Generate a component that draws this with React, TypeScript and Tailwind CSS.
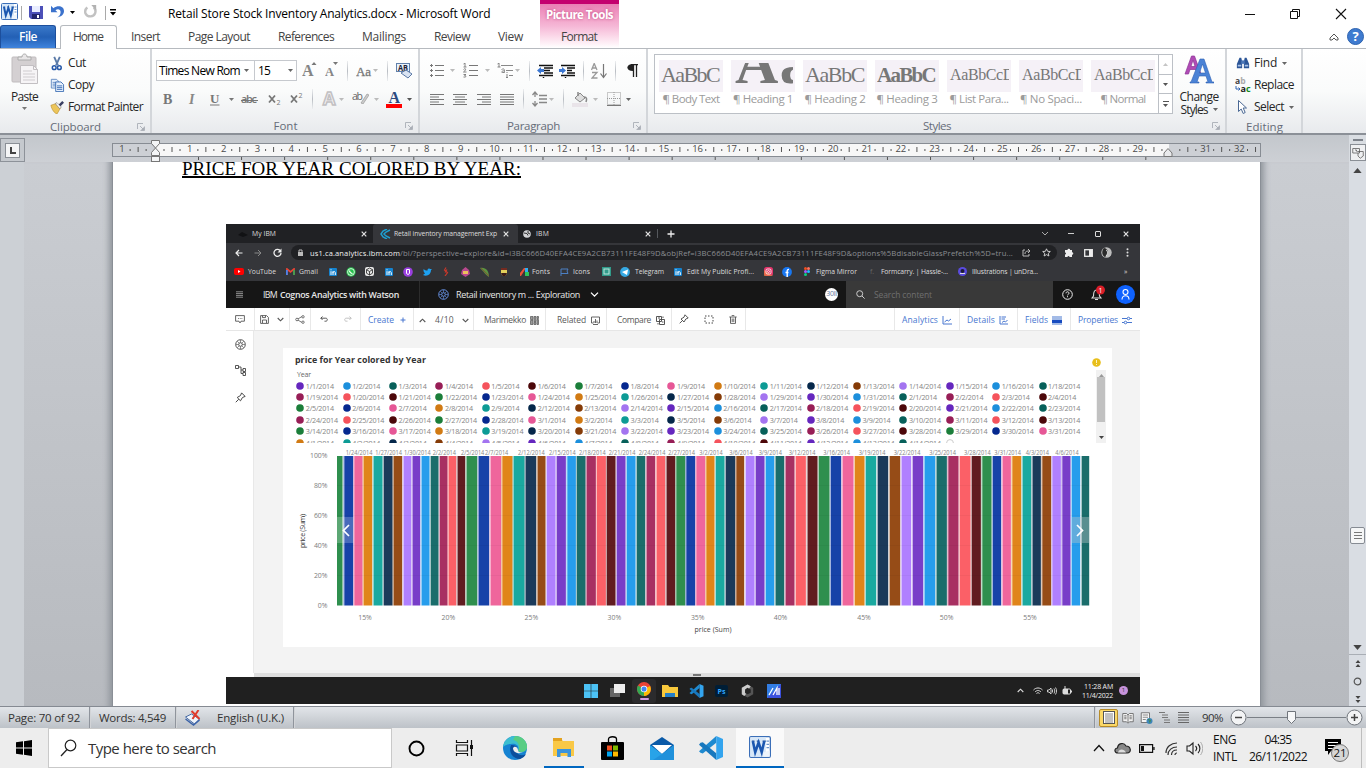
import { useLayoutEffect, useRef, type ReactNode } from "react";

/* Text set to an exact measure: tracking is computed from the natural width. */
function Fit({ c, children }: { c: string; children: string }) {
  const box = useRef<HTMLSpanElement>(null);
  const ink = useRef<HTMLSpanElement>(null);
  useLayoutEffect(() => {
    const b = box.current;
    const t = ink.current;
    if (!b || !t) return;
    t.style.letterSpacing = "0px";
    const natural = t.getBoundingClientRect().width;
    t.style.letterSpacing = `${(b.clientWidth - natural) / children.length}px`;
  }, [children]);
  return (
    <span ref={box} className={"block shrink-0 whitespace-nowrap leading-[14px] " + c}>
      <span ref={ink} className="inline-block">{children}</span>
    </span>
  );
}

function G({ c, v = "0 0 16 16", children }: { c: string; v?: string; children: ReactNode }) {
  return (
    <svg viewBox={v} className={"block shrink-0 " + c} fill="none">
      {children}
    </svg>
  );
}

const Caret = ({ c = "" }: { c?: string }) => (
  <G c={"h-[3px] w-[5px] " + c} v="0 0 5 3"><path d="M0 0h5L2.5 3z" fill="currentColor" /></G>
);
const Sep = ({ c = "" }: { c?: string }) => (
  <div className={"h-[20px] w-px shrink-0 bg-gradient-to-b from-[#eceef0] via-[#b9bdc3] to-[#eceef0] " + c} />
);
const Launcher = () => (
  <G c="h-[8px] w-[8px]" v="0 0 8 8">
    <path d="M.5 6V.5H6M3 3l3 3M7.500 3.500v4h-4" stroke="#a9aeb5" strokeWidth=".9" />
    <path d="M7 4v3H4z" fill="#a9aeb5" />
  </G>
);

function Group({ c, label, labelC, launch = true, children }: { c: string; label: string; labelC: string; launch?: boolean; children: ReactNode }) {
  return (
    <section className={"flex h-full shrink-0 flex-col border-r-2 border-[#d3d6da] " + c}>
      <div className="h-[69px]">{children}</div>
      <div className="flex h-[16px] items-center pt-[2px]">
        <div className="w-[14px]" />
        <div className="flex flex-1 justify-center"><Fit c={"text-[11.5px] text-[#666c78] " + labelC}>{label}</Fit></div>
        <div className="w-[13px]">{launch && <Launcher />}</div>
      </div>
    </section>
  );
}

const SERIF = "Liberation Serif, serif";
const SANS = "Open Sans, sans-serif";

const WordLogo = ({ c }: { c: string }) => (
  <G c={c} v="0 0 17 17">
    <rect x=".5" y=".5" width="16" height="16" rx="1" fill="#fff" stroke="#3b6fb8" />
    <rect x="1" y="1" width="12" height="15" fill="#d8e8f8" />
    <path d="M13.500 4h2M13.500 6.500h2M13.500 9h2" stroke="#6d96cc" />
    <path d="M2.200 4h2M6 4h2M10.500 4h2.500" stroke="#1b4f9f" strokeWidth="1" />
    <path d="M3 4l1.800 8.500L7.400 5l2.400 7.500L11.800 4" stroke="#1b57b0" strokeWidth="2" />
    <path d="M11 13l5-2v5h-5z" fill="#eef4fb" />
  </G>
);

function Header() {
  return (
    <header className="flex h-[48px] bg-white">
      <div className="w-[540px]">
        <div className="flex h-[25px] items-center">
          <WordLogo c="-mt-[2px] ml-px h-[17px] w-[17px]" />
          <div className="ml-[3px] h-[14px] w-px bg-[#a9a9a9]" />
          <G c="-mt-[2px] ml-[6px] h-[16px] w-[16px]">
            <path d="M1 2h14v13H3l-2-2z" fill="#4c50b8" />
            <rect x="4" y="2" width="8" height="6" fill="#e9edff" />
            <rect x="4" y="10" width="8" height="5" fill="#23266e" />
            <rect x="9" y="11" width="2" height="3" fill="#fff" />
          </G>
          <G c="-mt-[2px] ml-[7px] h-[13px] w-[13px]">
            <path d="M0 1v8h8L5.500 6.500C8 4 11.800 5 11.800 8.500c0 3-1.500 5-4.300 7 5.500-1 8.500-4 8.500-8C16 1 8 0 3 4z" fill="#3b72cc" />
          </G>
          <Caret c="ml-[6px] text-black" />
          <G c="-mt-[2px] ml-[9px] h-[13px] w-[13px]">
            <path d="M4 3C-1 8 2 14 8 14s8-7 4-11" stroke="#c2c2c2" strokeWidth="3" /><path d="M9 0h6v7z" fill="#b2b2b2" />
          </G>
          <div className="ml-[8px] h-[14px] w-px bg-[#a9a9a9]" />
          <G c="ml-[3px] h-[7px] w-[8px]" v="0 0 8 7"><path d="M1 0h6v1.500H1zM1 3h6L4 6.500z" fill="#000" /></G>
          <Fit c="ml-[51px] mt-[2px] w-[322px] text-[12px] text-black">Retail Store Stock Inventory Analytics.docx  -  Microsoft Word</Fit>
        </div>
        <div className="flex h-[23px] text-[12px] text-[#444]">
          <div className="flex w-[56px] items-center justify-center rounded-t-[3px] border border-b-0 border-[#1d4f9c] bg-gradient-to-b from-[#3a78c9] via-[#2360b5] to-[#3f84dd] text-white">
            <Fit c="w-[18px] font-semibold">File</Fit>
          </div>
          <div className="z-10 -mb-px ml-[4px] flex w-[57px] items-center rounded-t-[3px] border border-b-0 border-[#b6babf] bg-white pb-px pl-[12px]">
            <Fit c="w-[30px]">Home</Fit>
          </div>
          <div className="flex items-center">
            <Fit c="ml-[14px] w-[29px]">Insert</Fit>
            <Fit c="ml-[28px] w-[62px]">Page Layout</Fit>
            <Fit c="ml-[28px] w-[56px]">References</Fit>
            <Fit c="ml-[28px] w-[44px]">Mailings</Fit>
            <Fit c="ml-[28px] w-[36px]">Review</Fit>
            <Fit c="ml-[28px] w-[25px]">View</Fit>
          </div>
        </div>
      </div>
      <div className="flex w-[79px] flex-col border-t-4 border-[#c4006f] bg-gradient-to-b from-[#e97fb5] via-[#f5b7d6] to-white">
        <div className="flex h-[22px] items-center justify-center">
          <Fit c="w-[67px] text-[11.5px] font-bold text-white [text-shadow:0_0_3px_#c2467f]">Picture Tools</Fit>
        </div>
        <div className="flex h-[22px] items-center pl-[21px] text-[#444]"><Fit c="w-[36px] text-[12px]">Format</Fit></div>
      </div>
      <div className="flex-1">
        <div className="flex h-[27px] items-center justify-end">
          <G c="h-[12px] w-[12px]" v="0 0 12 12"><path d="M1 6.500h10" stroke="#111" /></G>
          <G c="ml-[33px] h-[12px] w-[12px]" v="0 0 12 12"><path d="M1.500 3.500h7v7h-7zM3.500 3.500v-2h7v7h-2" stroke="#111" /></G>
          <G c="ml-[34px] mr-[19px] h-[12px] w-[12px]" v="0 0 12 12"><path d="M1 1l10 10M11 1L1 11" stroke="#111" strokeWidth="1.100" /></G>
        </div>
        <div className="flex h-[19px] items-center justify-end">
          <G c="h-[9px] w-[10px]" v="0 0 10 9"><path d="M1 6l4-4 4 4v2H7L5 6 3 8H1z" stroke="#555" /></G>
          <G c="ml-[8px] mr-[2px] h-[17px] w-[17px]" v="0 0 17 17">
            <circle cx="8.500" cy="8.500" r="8" fill="#3f7bd0" stroke="#2d62ae" />
            <text x="8.500" y="13" fontSize="13" fontWeight="700" fill="#fff" textAnchor="middle" fontFamily={SANS}>?</text>
          </G>
        </div>
      </div>
    </header>
  );
}

const Lines = ({ c, d }: { c: string; d: string }) => (
  <G c={"h-[13px] w-[14px] " + c} v="0 0 14 13"><path d={d} stroke="#777" strokeWidth="1" /></G>
);

function Combo({ c, children }: { c: string; children: ReactNode }) {
  return <div className={"flex h-[21px] shrink-0 items-center border border-[#c6c9ce] bg-white text-[12px] text-black " + c}>{children}</div>;
}

function ClipboardGroup() {
  return (
    <Group c="w-[152px]" label="Clipboard" labelC="w-[51px]">
      <div className="flex h-full text-[12px] text-[#262626]">
        <div className="flex w-[49px] flex-col items-center pt-[4px] text-[#555]">
          <G c="h-[32px] w-[28px]" v="0 0 28 32">
            <rect x="1" y="4" width="24" height="25" rx="1" fill="#d4d0d2" stroke="#c0bcbe" />
            <path d="M7 7V4h4c0-4 5-4 5 0h4v3z" fill="#e8e6e7" stroke="#aaa" />
            <path d="M9.500 12.500h13l4 4v14h-17z" fill="#f6f4f6" stroke="#c2bfc2" />
            <path d="M22.500 12.500v4h4" stroke="#c2bfc2" />
            <path d="M12 18h9M12 21h12M12 24h12M12 27h12" stroke="#cfcccf" />
          </G>
          <Fit c="mt-[5px] w-[27px] text-[#262626]">Paste</Fit>
          <Caret c="mt-[3px] text-[#777]" />
        </div>
        <div className="flex flex-col pt-[3px]">
          <div className="flex h-[22px] items-center">
            <G c="h-[15px] w-[16px]"><path d="M5 1l4 9M11 1L7 10" stroke="#5b7ba8" strokeWidth="2" /><circle cx="5" cy="12.500" r="2" stroke="#2558a8" strokeWidth="1.600" /><circle cx="10.500" cy="12.500" r="2" stroke="#2558a8" strokeWidth="1.600" /></G>
            <Fit c="ml-[3px] w-[18px]">Cut</Fit>
          </div>
          <div className="flex h-[22px] items-center">
            <G c="h-[14px] w-[16px]"><path d="M1.500 1.500h6l2 2v8h-8z" fill="#e5effc" stroke="#5b86bf" /><path d="M3 5h4M3 7h4M3 9h4" stroke="#5b86bf" /><path d="M6.500 4.500h6l3 3v8h-9z" fill="#e5effc" stroke="#3569b1" /><path d="M8 9h6M8 11h6M8 13h6" stroke="#3569b1" /></G>
            <Fit c="ml-[3px] w-[26px]">Copy</Fit>
          </div>
          <div className="flex h-[22px] items-center">
            <G c="h-[14px] w-[16px]"><path d="M1 6l6-2 5 5-4 7c-3-1-6-5-7-10z" fill="#ecc55a" stroke="#b08320" strokeWidth=".6" /><path d="M6 4l5 6 2-2-5-5z" fill="#f5f5f5" stroke="#666" strokeWidth=".6" /><path d="M10 5l4-4 2 2-4 4z" fill="#3a3f62" /></G>
            <Fit c="ml-[3px] w-[75px]">Format Painter</Fit>
          </div>
        </div>
      </div>
    </Group>
  );
}

function FontGroup() {
  return (
    <Group c="w-[268px]" label="Font" labelC="w-[24px]">
      <div className="flex flex-col pl-[4px] pt-[11px] text-[#777]">
        <div className="flex h-[21px] items-center">
          <Combo c="w-[99px] pl-[2px]"><Fit c="w-[81px]">Times New Rom</Fit><Caret c="ml-[4px] text-[#666]" /></Combo>
          <Combo c="-ml-px w-[43px] pl-[3px]"><Fit c="w-[12px]">15</Fit><Caret c="ml-[18px] text-[#666]" /></Combo>
          <G c="ml-[5px] -mt-[2px] h-[17px] w-[15px]" v="0 0 15 17"><text x="0" y="14.500" fontSize="16" fontWeight="700" fill="#858585" fontFamily={SERIF} textLength="11">A</text><path d="M9.500 4l2.500-3 2.500 3z" fill="#777" /></G>
          <G c="ml-[8px] -mt-[2px] h-[17px] w-[13px]" v="0 0 13 17"><text x="0" y="14.500" fontSize="12.500" fontWeight="700" fill="#858585" fontFamily={SERIF}>A</text><path d="M8 1l2.500 3L13 1z" fill="#777" /></G>
          <Sep c="ml-[9px]" />
          <G c="ml-[8px] h-[16px] w-[16px]"><text x="0" y="12.500" fontSize="13" fill="#777" stroke="#777" strokeWidth=".3" fontFamily={SERIF} textLength="15">Aa</text></G>
          <Caret c="ml-[1px] text-[#bbb]" />
          <Sep c="ml-[9px]" />
          <G c="ml-[8px] h-[16px] w-[17px]" v="0 0 17 16"><rect x=".5" y=".5" width="13" height="8" fill="#e8f1fb" stroke="#6080ab" /><text x="2" y="7.500" fontSize="8" fontWeight="700" fill="#223" fontFamily={SANS} textLength="10" lengthAdjust="spacingAndGlyphs">AB</text><path d="M5 10l5-3 6 4-4 4z" fill="#d9e3f2" stroke="#5b79a6" /></G>
        </div>
        <div className="mt-[8px] flex h-[20px] items-center pl-[7px]">
          <G c="h-[14px] w-[10px]" v="0 0 10 14"><text x="0" y="12" fontSize="14" fontWeight="700" fill="#777" fontFamily={SERIF}>B</text></G>
          <G c="ml-[14px] h-[14px] w-[9px]" v="0 0 9 14"><text x="2" y="12" fontSize="14" fontStyle="italic" fontWeight="700" fill="#888" fontFamily={SERIF}>I</text></G>
          <G c="ml-[14px] h-[14px] w-[10px]" v="0 0 10 14"><text x="0" y="11" fontSize="13" fontWeight="700" fill="#777" fontFamily={SERIF}>U</text><path d="M0 13h9.500" stroke="#777" /></G>
          <Caret c="ml-[9px] text-[#777]" />
          <G c="ml-[7px] h-[14px] w-[17px]" v="0 0 17 14"><text x="0" y="11" fontSize="11" fontWeight="600" fill="#777" fontFamily={SANS} textLength="16">abc</text><path d="M0 8.500h17" stroke="#777" /></G>
          <G c="ml-[10px] h-[16px] w-[14px]" v="0 0 14 16"><path d="M1 4.500l6 7M7 4.500l-6 7" stroke="#777" strokeWidth="1.800" /><text x="8.500" y="14" fontSize="7" fill="#777" fontFamily={SANS}>2</text></G>
          <G c="ml-[8px] h-[16px] w-[14px]" v="0 0 14 16"><path d="M1 4.500l6 7M7 4.500l-6 7" stroke="#777" strokeWidth="1.800" /><text x="8.500" y="7" fontSize="7" fill="#777" fontFamily={SANS}>2</text></G>
          <Sep c="ml-[8px]" />
          <G c="ml-[8px] h-[16px] w-[17px]" v="0 0 17 16"><text x="2" y="14" fontSize="18" fontWeight="700" fill="#f4f2f4" stroke="#c2c0c2" strokeWidth="1.500" fontFamily={SANS}>A</text></G>
          <Caret c="ml-[1px] text-[#bbb]" />
          <G c="ml-[8px] -mt-[4px] h-[14px] w-[17px]" v="0 0 17 14"><text x="0" y="10" fontSize="10.500" fill="#666" fontFamily={SANS} textLength="11">ab</text><path d="M9 13l6-9 2 1-6 9z" fill="#ccc" stroke="#999" strokeWidth=".7" /></G>
          <Caret c="ml-[5px] text-[#bbb]" />
          <G c="ml-[7px] h-[17px] w-[17px]" v="0 0 17 17"><text x="2.500" y="11.500" fontSize="16" fontWeight="700" fill="#2c4a80" fontFamily={SERIF}>A</text><rect x="0" y="13" width="16" height="4" fill="#f00" /></G>
          <Caret c="ml-[4px] text-[#555]" />
        </div>
      </div>
    </Group>
  );
}

function ParagraphGroup() {
  return (
    <Group c="w-[228px]" label="Paragraph" labelC="w-[53px]">
      <div className="flex flex-col pl-[10px] pt-[11px] text-[#777]">
        <div className="flex h-[21px] items-center">
          <Lines c="" d="M5 1.500h9M5 6.500h9M5 11.500h9M0 1.500h3M0 6.500h3M0 11.500h3M1.500 0v3M1.500 5v3M1.500 10v3" />
          <Caret c="ml-[6px] text-[#bbb]" />
          <G c="ml-[8px] h-[15px] w-[15px]" v="0 0 15 15"><path d="M6 2.500h9M6 7.500h9M6 12.500h9" stroke="#777" /><path d="M.5 1l1.500-1v4M.5 4h3M.5 6.500c2-2 3.500 0 0 2.500h3M.5 11.500h2.500l-1.500 1.200c2.500 0 1.500 2-1 1.300" stroke="#777" strokeWidth=".9" /></G>
          <Caret c="ml-[7px] text-[#bbb]" />
          <G c="ml-[7px] h-[16px] w-[16px]"><path d="M4 2.500h12M9 7.500h7M12 12.500h4" stroke="#888" /><path d="M.5 1l1.500-1v4M.5 4h3M4.500 6.500c3-1.500 3 0 3 3h-2c-1.500 0-1-1.700 2-1.700M10 11v3.500M9 14.500h2M10 9v1" stroke="#777" strokeWidth=".9" /></G>
          <Caret c="ml-[2px] text-[#bbb]" />
          <Sep c="ml-[9px]" />
          <G c="ml-[7px] h-[14px] w-[16px]" v="0 0 16 14"><path d="M2 1.500h14M7 4h9M7 6.500h6M7 9h9M2 11.500h14M6.500 13v1" stroke="#111" strokeWidth="1.400" /><path d="M0 6.500L4 3v2h3v3H4v2z" fill="#3b77d2" /></G>
          <G c="ml-[6px] h-[14px] w-[16px]" v="0 0 16 14"><path d="M2 1.500h14M8 4h8M8 6.500h5M8 9h8M2 11.500h14M6.500 13v1" stroke="#111" strokeWidth="1.400" /><path d="M7 6.500L3 3v2H0v3h3v2z" fill="#3b77d2" /></G>
          <Sep c="ml-[8px]" />
          <G c="ml-[7px] h-[16px] w-[16px]"><path d="M.5 7L3.200.5 6 7M1.500 5h3.500M1 9.500h5l-5 5.500h5.500" stroke="#999" strokeWidth="1.300" /><path d="M12.500 1v13M9.500 10.500l3 4 3-4" stroke="#777" strokeWidth="1.200" /></G>
          <Sep c="ml-[8px]" />
          <G c="ml-[11px] h-[13px] w-[11px]" v="0 0 11 13"><path d="M6.500 0v13M9.500 0v13M4 .7h7" stroke="#222" strokeWidth="1.300" /><path d="M6 0v7C-1.500 7-1.500 0 6 0z" fill="#222" /></G>
        </div>
        <div className="mt-[8px] flex h-[20px] items-center">
          <Lines c="" d="M0 1.500h14M0 4h9M0 6.500h14M0 9h9M0 11.500h14" />
          <Lines c="ml-[9px]" d="M0 1.500h14M2 4h10M0 6.500h14M2 9h10M0 11.500h14" />
          <Lines c="ml-[10px]" d="M0 1.500h14M5 4h9M0 6.500h14M5 9h9M0 11.500h14" />
          <Lines c="ml-[9px]" d="M0 1.500h14M0 4h14M0 6.500h14M0 9h14M0 11.500h14" />
          <Sep c="ml-[9px]" />
          <G c="ml-[8px] h-[16px] w-[15px]" v="0 0 15 16"><path d="M7 4.500h8M7 8h8M7 11.500h8M3 1v5M3 10v5M.5 4L3 1l2.500 3M.5 12L3 15l2.500-3" stroke="#888" strokeWidth="1.300" /></G>
          <Caret c="ml-[2px] text-[#bbb]" />
          <Sep c="ml-[9px]" />
          <G c="ml-[8px] h-[16px] w-[16px]"><rect y="12" width="16" height="4" fill="#e9e4e9" /><path d="M3 7l5-5 5 5-5 4z" fill="#ddd" stroke="#888" /><path d="M6 5V1M12 6c3 0 3 2 2 5" stroke="#888" strokeWidth="1.500" /></G>
          <Caret c="ml-[5px] text-[#bbb]" />
          <G c="ml-[9px] h-[14px] w-[14px]" v="0 0 14 14"><path d="M.5.5h13v12H.5zM7 0v13M0 6.500h14" stroke="#999" strokeDasharray="1 1" /><path d="M0 13.500h14" stroke="#777" /></G>
          <Caret c="ml-[5px] text-[#666]" />
        </div>
      </div>
    </Group>
  );
}

const styles: { cls: string; s: string; name: string; w: string }[] = [
  { s: "AaBbC", cls: "text-[22px] w-[58px] -mt-[3px]", name: "¶ Body Text", w: "w-[57px]" },
  { s: "Aa", cls: "text-[60px] w-[76px] font-bold -mt-[15px] ml-[2px]", name: "¶ Heading 1", w: "w-[60px]" },
  { s: "AaBbC", cls: "text-[22px] w-[59px] -mt-[3px]", name: "¶ Heading 2", w: "w-[61px]" },
  { s: "AaBbC", cls: "text-[21px] w-[58px] font-bold -mt-[3px]", name: "¶ Heading 3", w: "w-[61px]" },
  { s: "AaBbCcD", cls: "text-[16px] w-[64px] -mt-[3px] ml-[1px]", name: "¶ List Para...", w: "w-[59px]" },
  { s: "AaBbCcD", cls: "text-[16px] w-[64px] -mt-[3px] ml-[1px]", name: "¶ No Spaci...", w: "w-[62px]" },
  { s: "AaBbCcD", cls: "text-[16px] w-[64px] -mt-[3px] ml-[1px]", name: "¶ Normal", w: "w-[45px]" },
];

function StylesGroup() {
  return (
    <Group c="w-[579px]" label="Styles" labelC="w-[28px]">
      <div className="flex h-full items-start pl-[6px] pt-[5px]">
        <div className="flex h-[60px] w-[521px] border border-[#bcc0c6] bg-white">
          <div className="flex flex-1 gap-[8px] pl-[4px] pt-[5px]">
            {styles.map((s) => (
              <div key={s.name} className="flex w-[64px] shrink-0 flex-col items-center">
                <div className="flex h-[32px] w-[64px] items-center overflow-hidden bg-[#f5f1f7] px-[2px] font-['Liberation_Serif',serif] text-[#777]">
                  <div className="flex h-[26px] w-[60px] items-start overflow-hidden">
                    <Fit c={"!leading-[30px] " + s.cls}>{s.s}</Fit>
                  </div>
                </div>
                <Fit c={"text-[11.5px] text-[#9b9b9b] " + s.w}>{s.name}</Fit>
              </div>
            ))}
          </div>
          <div className="flex w-[14px] flex-col divide-y divide-[#bcc0c6] border-l border-[#bcc0c6] text-[#555]">
            <div className="flex flex-1 items-center justify-center text-[#c5c5c5]"><Caret c="rotate-180" /></div>
            <div className="flex flex-1 items-center justify-center"><Caret /></div>
            <div className="flex flex-1 flex-col items-center justify-center gap-[2px]"><div className="h-px w-[6px] bg-[#555]" /><Caret /></div>
          </div>
        </div>
        <div className="flex w-[52px] flex-col items-center text-[12px] text-[#262626]">
          <G c="h-[31px] w-[30px]" v="0 0 30 31">
            <path d="M1 20L7.500 2h3L17 20h-3.500l-1.500-4.500H6L4.500 20zM7 12.500h4L9 6z" fill="#b04bb5" stroke="#8d3596" strokeWidth=".7" />
            <path d="M7 28L16 5h4l8 23h2v1h-8v-1h2l-2-6h-7l-2 6h2v1H6v-1zM15.500 19h6l-3-9z" fill="#4b83d6" stroke="#2b60b3" strokeWidth=".6" />
          </G>
          <Fit c="mt-[5px] w-[39px] !leading-[13px]">Change</Fit>
          <div className="flex items-center"><Fit c="w-[27px] !leading-[13px]">Styles</Fit><Caret c="ml-[5px] text-[#666]" /></div>
        </div>
      </div>
    </Group>
  );
}

function EditingGroup() {
  return (
    <Group c="w-[76px]" label="Editing" labelC="w-[37px]" launch={false}>
      <div className="flex flex-col pl-[8px] pt-[3px] text-[12px] text-[#262626]">
        <div className="flex h-[22px] items-center">
          <G c="h-[14px] w-[16px]"><path d="M1 14V9l3-7h2l1 4v8H1zM9 14V6l1-4h2l3 7v5z" fill="#2b5597" /><rect x="6" y="5" width="4" height="4" fill="#4c77b8" /><path d="M2 11h4M10 11h4" stroke="#a8c2e8" strokeWidth="2" /></G>
          <Fit c="ml-[3px] w-[23px]">Find</Fit><Caret c="ml-[5px] text-[#666]" />
        </div>
        <div className="flex h-[22px] items-center">
          <G c="h-[16px] w-[16px]"><text x="0" y="7" fontSize="8.500" fontWeight="700" fill="#444" fontFamily={SANS}>a<tspan fill="#aaa">b</tspan></text><text x="5.500" y="15" fontSize="9" fontWeight="700" fill="#222" fontFamily={SANS}>a<tspan fill="#128a1c">c</tspan></text><path d="M1 9v3h4M3.500 10.500L5 12l-1.500 1.500" stroke="#2f62b2" /></G>
          <Fit c="ml-[3px] w-[40px]">Replace</Fit>
        </div>
        <div className="flex h-[22px] items-center">
          <G c="h-[16px] w-[16px]"><path d="M3.500 1.500v11l2.700-2.500 2 4.500 2-1-2-4.500h3.300z" fill="#fff" stroke="#4a6894" /></G>
          <Fit c="ml-[3px] w-[30px]">Select</Fit><Caret c="ml-[5px] text-[#666]" />
        </div>
      </div>
    </Group>
  );
}

const ticks = Array.from({ length: 34 }, (_, i) => i - 1);

function Ruler() {
  return (
    <div className="flex h-[27px] bg-gradient-to-b from-[#c3c7cc] to-[#cdd0d5]">
      <div className="mt-[3px] flex h-[24px] w-[25px] shrink-0 items-center justify-center border border-[#8d9299] bg-[#c5c9ce]">
        <div className="flex h-[15px] w-[15px] items-center justify-center border border-[#8a8f96] bg-[#f4f5f6]"><div className="mt-px h-[7px] w-[6px] border-b-2 border-l-2 border-[#444]" /></div>
      </div>
      <div className="w-[87px] shrink-0" />
      <div className="relative mt-[8px] flex h-[14px] w-[1149px] shrink-0 items-center border border-[#878c93] bg-[#cdd0d5] text-[9.500px] text-[#4a4a4a]">
        <div className="h-full w-[42px]" />
        <div className="h-full w-[1014px] bg-[#f7f7f7]" />
        <div className="absolute inset-y-0 left-[-8px] flex items-center pb-px">
          <div className="w-[33.86px] text-center">1</div>
          <div className="w-[33.86px]" />
          {ticks.slice(2).map((n) => (
            <div key={n} className="w-[33.86px] text-center tracking-[-0.2px]">{n === 30 ? "" : n}</div>
          ))}
        </div>
        <svg className="absolute left-0 top-0 h-[19px] w-[1147px]" viewBox="113 144 1147 19" fill="none">
          {ticks.map((n) => {
            const x = 155 + n * 33.86;
            return <path key={n} d={`M${x + 17} 147v5M${x + 9} 149v2M${x + 25} 149v2`} stroke="#555" strokeWidth="1" />;
          })}
          {Array.from({ length: 23 }, (_, i) => (
            <path key={i} d={`M${198.5 + i * 43.06} 157v3`} stroke="#555" />
          ))}
        </svg>
        <svg className="absolute left-[38px] top-[-4px] h-[22px] w-[9px]" viewBox="0 0 9 22">
          <path d="M.5.5h8v3l-4 4.500 4 4.500v3h-8v-3l4-4.500-4-4.500z" fill="#f4f5f6" stroke="#777" />
          <rect x=".5" y="16.500" width="8" height="5" fill="#f4f5f6" stroke="#777" />
        </svg>
        <svg className="absolute left-[1050px] top-[4px] h-[9px] w-[10px]" viewBox="0 0 10 9"><path d="M5 .5l4 4.500v3.500H1V5z" fill="#e9eaec" stroke="#777" /></svg>
      </div>
      <div className="flex-1" />
      <div className="flex w-[17px] flex-col items-center bg-[#d9dde2] pt-[4px]">
        <div className="h-[2px] w-[10px] bg-[#7d828a]" />
        <div className="mt-[3px] flex h-[17px] w-[16px] items-center justify-center border border-[#8a8f96] bg-[#eff0f2]">
          <G c="h-[12px] w-[12px]"><path d="M1 2h9v6H1zM7 6h8v6l-4 3-3-3V8M4 4h2v2" stroke="#555" /></G>
        </div>
      </div>
    </div>
  );
}

/* ---------- Embedded browser capture ---------- */

const X = ({ c }: { c: string }) => <G c={"h-[6px] w-[6px] " + c} v="0 0 6 6"><path d="M.7.7l4.600 4.600M5.300.7L.7 5.300" stroke="#e3e3e3" strokeWidth="1.200" /></G>;
const LinkedIn = ({ c }: { c: string }) => (
  <G c={"h-[8px] w-[8px] " + c} v="0 0 8 8"><rect width="8" height="8" rx="1" fill="#1583cf" /><path d="M2 3.200V7M4 7V3.200M4 5c0-2 2.300-2 2.300 0v2M2 1.300v1" stroke="#fff" strokeWidth="1" /></G>
);
const BM = ({ c, children }: { c: string; children: string }) => <Fit c={"text-[6.8px] text-[#dcdcdc] !leading-[9px] " + c}>{children}</Fit>;

function Browser() {
  return (
    <div className="h-[57px] bg-[#35363a] text-[#e6e6e6]">
      <div className="flex h-[19px] items-center bg-[#202124]">
        <G c="ml-[11px] h-[8px] w-[12px]" v="0 0 12 8"><path d="M1 5l4-3 6 3-5 2z" fill="#111214" /></G>
        <BM c="ml-[3px] w-[24px]">My IBM</BM><X c="ml-[85px]" />
        <div className="ml-[6px] flex h-full w-[145px] items-center rounded-t-[3px] bg-[#35363a]">
          <G c="ml-[7px] h-[10px] w-[11px]" v="0 0 11 10"><path d="M10 1L6 3 4 5l2 2 4 2M7 0L3 2 1 5l2 3 4 2" stroke="#1e9fd0" strokeWidth="1.500" /></G>
          <BM c="ml-[3px] w-[103px]">Retail inventory management Exp</BM><X c="ml-[6px]" />
        </div>
        <G c="ml-[5px] h-[8px] w-[8px]" v="0 0 8 8"><circle cx="4" cy="4" r="3.800" fill="#d2d4d7" /><path d="M1 3l3 .5 1 2M5 1v2l2 1" stroke="#333" /></G>
        <BM c="ml-[5px] w-[13px]">IBM</BM><X c="ml-[96px]" />
        <div className="ml-[6px] h-[9px] w-px bg-[#55585d]" />
        <G c="ml-[9px] h-[8px] w-[8px]" v="0 0 8 8"><path d="M4 .5v7M.5 4h7" stroke="#eee" strokeWidth="1.300" /></G>
        <G c="ml-[366px] h-[6px] w-[8px]" v="0 0 8 6"><path d="M1 1l3 3 3-3" stroke="#aaa" /></G>
        <div className="ml-[19px] h-px w-[6px] bg-[#ccc]" />
        <div className="ml-[21px] h-[6px] w-[6px] rounded-[1px] border border-[#ddd]" /><X c="ml-[22px]" />
      </div>
      <div className="flex h-[19px] items-center">
        <G c="ml-[9px] h-[8px] w-[8px]" v="0 0 8 8"><path d="M7.500 4H1M4 1L1 4l3 3" stroke="#eee" strokeWidth="1.200" /></G>
        <G c="ml-[11px] h-[8px] w-[8px]" v="0 0 8 8"><path d="M.5 4H7M4 1l3 3-3 3" stroke="#888" /></G>
        <G c="ml-[11px] h-[9px] w-[9px]" v="0 0 9 9"><path d="M7.500 3A3.500 3.500 0 1 0 8 5" stroke="#eee" strokeWidth="1.300" /><path d="M8.500.5v4h-4z" fill="#eee" /></G>
        <div className="ml-[9px] flex h-[15px] w-[766px] items-center rounded-full bg-[#202124]">
          <G c="ml-[7px] h-[7px] w-[5px]" v="0 0 5 7"><rect y="3" width="5" height="4" fill="#bbb" /><path d="M1 3V1h3v2" stroke="#bbb" /></G>
          <Fit c="ml-[7px] w-[90px] text-[7.500px] !leading-[10px] text-[#f1f1f1]">us1.ca.analytics.ibm.com</Fit>
          <Fit c="w-[613px] text-[7.700px] !leading-[10px] text-[#8b8e93]">/bi/?perspective=explore&amp;id=i3BC666D40EFA4CE9A2CB73111FE48F9D&amp;objRef=i3BC666D40EFA4CE9A2CB73111FE48F9D&amp;options%5BdisableGlassPrefetch%5D=tru...</Fit>
          <G c="ml-[9px] h-[9px] w-[9px]" v="0 0 9 9"><path d="M3 2H1v6h6V6M3 6c0-3 2-3 5-3M6 1l2 2-2 2" stroke="#bbb" /></G>
          <G c="ml-[11px] h-[9px] w-[9px]" v="0 0 9 9"><path d="M4.500.8l1.100 2.500 2.700.2-2 1.800.6 2.700-2.400-1.400L2.100 8l.6-2.700-2-1.800 2.700-.2z" stroke="#ddd" strokeWidth=".9" /></G>
        </div>
        <G c="ml-[7px] h-[9px] w-[10px]" v="0 0 10 9"><path d="M1 2h2.500a1.300 1.300 0 0 1 2.600 0H8v2.200a1.300 1.300 0 0 1 0 2.600V9H5.500a1 1 0 0 0-2 0H1V6.500a1 1 0 0 0 0-2z" fill="#eee" /></G>
        <G c="ml-[10px] h-[8px] w-[9px]" v="0 0 9 8"><rect x=".7" y=".7" width="7.600" height="6.600" stroke="#eee" strokeWidth="1.300" /><rect x="5" y="1" width="3" height="6" fill="#eee" /></G>
        <G c="ml-[8px] h-[11px] w-[11px]" v="0 0 11 11"><circle cx="5.500" cy="5.500" r="5.200" fill="#bdbdbd" /><path d="M3 1c5 1 5 6 1 9-4-2-3-7-1-9z" fill="#2a2a2a" /><path d="M5 3c2 1 2 4 0 6" stroke="#eee" /></G>
        <G c="ml-[14px] h-[9px] w-[3px]" v="0 0 3 9"><circle cx="1.500" cy="1.200" r="1" fill="#ddd" /><circle cx="1.500" cy="4.500" r="1" fill="#ddd" /><circle cx="1.500" cy="7.800" r="1" fill="#ddd" /></G>
      </div>
      <div className="flex h-[19px] items-center">
        <G c="ml-[8px] h-[7px] w-[10px]" v="0 0 10 7"><rect width="10" height="7" rx="2" fill="#f00" /><path d="M4 2v3l2.500-1.500z" fill="#fff" /></G>
        <BM c="ml-[4px] w-[28px]">YouTube</BM>
        <G c="ml-[10px] h-[7px] w-[9px]" v="0 0 9 7"><path d="M1 7V1l3.500 3L8 1v6" stroke="#ea4335" strokeWidth="1.700" /><path d="M.9 7V2" stroke="#4285f4" strokeWidth="1.700" /><path d="M8 7V2" stroke="#34a853" strokeWidth="1.700" /></G>
        <BM c="ml-[4px] w-[19px]">Gmail</BM>
        <LinkedIn c="ml-[11px]" />
        <G c="ml-[9px] h-[10px] w-[10px]" v="0 0 10 10"><circle cx="5" cy="5" r="4.700" fill="#27c04c" /><circle cx="5" cy="5" r="3.400" stroke="#fff" strokeWidth=".8" /><path d="M3.500 3.500c0 1.500 1.500 3 3 3" stroke="#fff" strokeWidth="1.200" /></G>
        <G c="ml-[9px] h-[9px] w-[9px]" v="0 0 9 9"><rect width="9" height="9" rx="2" fill="#e8e8e8" /><path d="M4.500 1l3 1.700v3.500l-3 1.800-3-1.800V2.700zM1.500 2.700l3 1.800 3-1.800M4.500 4.500V8" stroke="#222" strokeWidth=".8" /></G>
        <LinkedIn c="ml-[11px]" />
        <G c="ml-[10px] h-[10px] w-[10px]" v="0 0 10 10"><circle cx="5" cy="5" r="4.800" fill="#9a3fe0" /><path d="M3.500 2.500h3v4l-1.500 1-1.500-1z" stroke="#fff" strokeWidth="1" /></G>
        <G c="ml-[10px] h-[8px] w-[9px]" v="0 0 9 8"><path d="M0 7c4 2 8-.5 8-5l1-1H7C5.500 0 4.500 1 4.500 2.500 3 2.500 1.500 2 .7 1 0 3 1 4.500 2 5.500z" fill="#1da1f2" /></G>
        <G c="ml-[10px] h-[9px] w-[8px]" v="0 0 8 9"><path d="M4 .5L2.500 3l3 2.500L3 9M3 5.500L5 2.500" stroke="#c8382b" strokeWidth="1.200" /></G>
        <G c="ml-[11px] h-[10px] w-[9px]" v="0 0 9 10"><path d="M1 3l3.500-3L8 3l1 4-4.500 3L0 7z" fill="#b9488f" /><rect x="2" y="4" width="5" height="3" fill="#ecc15b" /></G>
        <G c="ml-[10px] h-[10px] w-[10px]" v="0 0 10 10"><path d="M0 1c6-1 9 3 9 9C5 7 4 5 0 1z" fill="#5b9440" /><path d="M1 1l8 8" stroke="#8a4530" strokeWidth=".8" /></G>
        <G c="ml-[10px] h-[8px] w-[8px]" v="0 0 8 8"><path d="M1 1h6v4L5.500 8h-3L1 5z" fill="#e2cf5a" /><path d="M1 5h6L5.500 8h-3z" fill="#3a1a18" /><rect x="1" width="6" height="2" fill="#742b20" /></G>
        <G c="ml-[12px] h-[8px] w-[9px]" v="0 0 9 8"><path d="M0 8V5l4-5h2L1 8z" fill="#ee5136" /><path d="M5 0h3v4H5z" fill="#2daff4" /><rect x="5" y="4" width="4" height="4" fill="#2fc45a" /></G>
        <BM c="ml-[3px] w-[18px]">Fonts</BM>
        <G c="ml-[10px] h-[8px] w-[9px]" v="0 0 9 8"><path d="M1 8V1h7L7 3l1 2.500H1" stroke="#4c80c4" /></G>
        <BM c="ml-[4px] w-[17px]">Icons</BM>
        <G c="ml-[12px] h-[9px] w-[9px]" v="0 0 9 9"><rect width="9" height="9" fill="#319b8a" /><rect x="2" y="2" width="5" height="5" stroke="#bfe6dc" /></G>
        <G c="ml-[9px] h-[10px] w-[10px]" v="0 0 10 10"><circle cx="5" cy="5" r="4.900" fill="#35a9e4" /><path d="M2 5l6-2.500L7 8 4.500 6.500z" fill="#fff" /></G>
        <BM c="ml-[5px] w-[29px]">Telegram</BM>
        <LinkedIn c="ml-[10px]" />
        <BM c="ml-[5px] w-[67px]">Edit My Public Profi...</BM>
        <G c="ml-[10px] h-[9px] w-[9px]" v="0 0 9 9"><rect width="9" height="9" rx="2.500" fill="#e0356a" /><path d="M0 9h9L0 3z" fill="#f28b3b" opacity=".6" /><rect x="2" y="2" width="5" height="5" rx="1.500" stroke="#fff" strokeWidth=".8" /><circle cx="4.500" cy="4.500" r="1" stroke="#fff" strokeWidth=".7" /></G>
        <G c="ml-[9px] h-[10px] w-[10px]" v="0 0 10 10"><circle cx="5" cy="5" r="4.900" fill="#1877f2" /><path d="M5.200 10V4c0-1.300.6-1.600 1.800-1.500M3.500 5.500h3" stroke="#fff" strokeWidth="1.400" /></G>
        <G c="ml-[12px] h-[9px] w-[6px]" v="0 0 6 9"><rect width="3" height="3" rx="1.500" fill="#f24e1e" /><rect x="3" width="3" height="3" rx="1.500" fill="#ff7262" /><rect y="3" width="3" height="3" rx="1.500" fill="#a259ff" /><circle cx="4.500" cy="4.500" r="1.500" fill="#1abcfe" /><circle cx="1.500" cy="7.500" r="1.500" fill="#0acf83" /></G>
        <BM c="ml-[6px] w-[41px]">Figma Mirror</BM>
        <BM c="ml-[13px] w-[4px] !text-[#666]">f.</BM>
        <BM c="ml-[7px] w-[67px]">Formcarry. | Hassle-...</BM>
        <G c="ml-[10px] h-[9px] w-[9px]" v="0 0 9 9"><circle cx="4.500" cy="4.500" r="4.500" fill="#5a4bdf" /><circle cx="4.500" cy="4" r="2" fill="#1d1b33" /><path d="M2 6.500h5" stroke="#ddd" /></G>
        <BM c="ml-[5px] w-[66px]">Illustrations | unDra...</BM>
        <BM c="ml-[86px] w-[4px]">»</BM>
      </div>
    </div>
  );
}

const Explore = ({ c, s }: { c: string; s: string }) => (
  <G c={"h-[11px] w-[11px] " + c} v="0 0 11 11"><circle cx="5.500" cy="5.500" r="4.800" stroke={s} strokeWidth=".9" /><circle cx="5.500" cy="5.500" r="1.800" stroke={s} strokeWidth=".9" /><path d="M5.500 1v2.500M5.500 7.500V10M1 5.500h2.500M7.500 5.500H10M2.500 2.500l1.500 1.500M7 7l1.500 1.500M8.500 2.500L7 4M4 7L2.500 8.500" stroke={s} strokeWidth=".6" /></G>
);
const Chev = ({ c, up = false, s = "#555" }: { c: string; up?: boolean; s?: string }) => (
  <G c={"h-[5px] w-[7px] " + c} v="0 0 7 5"><path d={up ? "M.7 4l2.800-2.800L6.300 4" : "M.7 1l2.800 2.800L6.300 1"} stroke={s} strokeWidth="1.100" /></G>
);

function CognosHeader() {
  return (
    <div className="flex h-[27px] items-center bg-[#161616] text-[#e8e8e8]">
      <G c="ml-[10px] h-[7px] w-[7px]" v="0 0 7 7"><path d="M0 .8h7M0 2.600h7M0 4.400h7M0 6.200h7" stroke="#aaa" strokeWidth=".8" /></G>
      <Fit c="ml-[20px] w-[14px] text-[8.800px] !leading-[12px]">IBM</Fit>
      <Fit c="ml-[3px] w-[119px] text-[8.800px] font-semibold !leading-[12px]">Cognos Analytics with Watson</Fit>
      <div className="ml-[20px] h-full w-px bg-[#2c2c2c]" />
      <Explore c="ml-[18px]" s="#6d9af0" />
      <Fit c="ml-[7px] w-[124px] text-[9px] !leading-[12px]">Retail inventory m ... Exploration</Fit>
      <Chev c="ml-[11px] scale-125" s="#fff" />
      <div className="ml-[227px] flex h-[13px] w-[13px] items-center justify-center overflow-hidden rounded-full bg-white text-[7px] tracking-[-0.3px] text-[#6478a0]">30ll</div>
      <div className="ml-[8px] flex h-full w-[207px] items-center bg-[#393939]">
        <G c="ml-[10px] h-[9px] w-[9px]" v="0 0 9 9"><circle cx="3.700" cy="3.700" r="3" stroke="#ccc" strokeWidth="1" /><path d="M6 6l2.600 2.600" stroke="#ccc" /></G>
        <Fit c="ml-[9px] w-[58px] text-[8.500px] !leading-[12px] text-[#6f6f6f]">Search content</Fit>
      </div>
      <G c="ml-[9px] h-[11px] w-[11px]" v="0 0 11 11"><circle cx="5.500" cy="5.500" r="4.800" stroke="#eee" /><path d="M4 4.300c0-2 3-2 3 0 0 1-1.500 1-1.500 2M5.500 7.200v1" stroke="#eee" /></G>
      <G c="-mt-[2px] ml-[18px] h-[17px] w-[15px]" v="0 0 15 17"><path d="M1 13l1.500-2c0-4 .5-6 3-6s3 2 3 6l1.500 2zM4 14.500h3" stroke="#ddd" strokeWidth="1.100" /><circle cx="9.500" cy="5" r="4.500" fill="#da1e28" /><text x="9.500" y="7.600" fontSize="7" fill="#fff" textAnchor="middle" fontFamily={SANS}>1</text></G>
      <G c="ml-[10px] h-[19px] w-[19px]" v="0 0 19 19"><circle cx="9.500" cy="9.500" r="9.500" fill="#0f62fe" /><circle cx="9.500" cy="7" r="2.500" stroke="#fff" strokeWidth="1.100" /><path d="M6 14.500c0-5 7-5 7 0" stroke="#fff" strokeWidth="1.100" /></G>
    </div>
  );
}

const V = ({ c }: { c: string }) => <div className={"h-full w-px shrink-0 bg-[#e8e8e8] " + c} />;
const TB = ({ c, children }: { c: string; children: string }) => <Fit c={"mt-px text-[8.500px] !leading-[12px] " + c}>{children}</Fit>;

function Pin({ c }: { c: string }) {
  return <G c={"h-[10px] w-[10px] " + c} v="0 0 10 10"><path d="M6 .8L9.200 4 6.800 5 5 8 2 5l3-1.800zM3.400 6.600L.7 9.300" stroke="#444" strokeWidth=".9" /></G>;
}

function Toolbar() {
  return (
    <div className="flex h-[23px] items-center border-b border-[#e6e6e6] bg-white text-[#5a5a5a]">
      <div className="flex w-[28px] justify-center">
        <G c="h-[9px] w-[10px]" v="0 0 10 9"><path d="M.6.6h8.800v5.600H6L5 8 4 6.200H.6zM3 3.500h.8M4.800 3.500h.8M6.500 3.500h.8" stroke="#555" strokeWidth=".9" /></G>
      </div>
      <V c="" />
      <G c="ml-[5px] h-[9px] w-[9px]" v="0 0 9 9"><path d="M.6.6h6L8.400 2.400v6H.6zM2.500.6v2h3v-2M2.500 8V5h4v3" stroke="#555" strokeWidth=".9" /></G>
      <Chev c="ml-[8px]" /><V c="ml-[5px]" />
      <G c="ml-[5px] h-[9px] w-[10px]" v="0 0 10 9"><path d="M2 4.500l5-3M2 4.500l5 3" stroke="#555" strokeWidth=".8" /><circle cx="2" cy="4.500" r="1.300" fill="#fff" stroke="#555" strokeWidth=".8" /><circle cx="8" cy="1.800" r="1.200" fill="#fff" stroke="#555" strokeWidth=".8" /><circle cx="8" cy="7.200" r="1.200" fill="#fff" stroke="#555" strokeWidth=".8" /></G>
      <V c="ml-[5px]" />
      <G c="ml-[9px] h-[6px] w-[8px]" v="0 0 8 6"><path d="M2.500.5L.8 2.200l1.700 1.700M.8 2.200h5c2 0 2 3 0 3H4.500" stroke="#444" strokeWidth=".9" /></G>
      <G c="ml-[16px] h-[6px] w-[8px]" v="0 0 8 6"><path d="M5.500.5l1.700 1.700-1.700 1.700M7.200 2.200h-5c-2 0-2 3 0 3h1.300" stroke="#bbb" strokeWidth=".9" /></G>
      <V c="ml-[8px]" />
      <TB c="ml-[7px] w-[26px] text-[#4877d0]">Create</TB>
      <G c="ml-[6px] mt-[2px] h-[6px] w-[6px]" v="0 0 6 6"><path d="M3 .5v5M.5 3h5" stroke="#4877d0" /></G>
      <V c="ml-[7px]" />
      <Chev c="ml-[5px] mt-[2px]" up />
      <TB c="ml-[9px] w-[19px]">4/10</TB><Chev c="ml-[8px] mt-[2px]" /><V c="ml-[4px]" />
      <TB c="ml-[10px] w-[42px]">Marimekko</TB>
      <G c="ml-[4px] mt-[2px] h-[9px] w-[9px]" v="0 0 9 9"><path d="M.5.5h2.500v3H.5zM.5 4.500h2.500v4H.5zM4 .5h2v5H4zM4 6.500h2v2H4zM7 .5h1.500v2H7zM7 3.500h1.500v5H7z" fill="#999" stroke="#555" strokeWidth=".7" /></G>
      <V c="ml-[6px]" />
      <TB c="ml-[11px] w-[29px]">Related</TB>
      <G c="ml-[5px] mt-[2px] h-[9px] w-[9px]" v="0 0 9 9"><path d="M.5 1h8v6H6.500M2.500 7H.5V1M2 8.500h5M3 7V5M4.500 7V3M6 7V4.500" stroke="#555" strokeWidth=".9" /></G>
      <V c="ml-[6px]" />
      <TB c="ml-[10px] w-[34px]">Compare</TB>
      <G c="ml-[5px] mt-[2px] h-[9px] w-[9px]" v="0 0 9 9"><path d="M.5.5h5v5h-5zM3.500 3.500h5v5h-5zM7 2V.5M2 7v1.500M2 2h2M6 6h1.500" stroke="#444" strokeWidth=".9" /></G>
      <V c="ml-[6px]" />
      <Pin c="ml-[7px]" />
      <G c="ml-[15px] h-[9px] w-[10px]" v="0 0 10 9"><path d="M1 1h8v7H1z" stroke="#444" strokeDasharray="1.500 1.500" /></G>
      <G c="ml-[15px] h-[9px] w-[8px]" v="0 0 8 9"><path d="M1.500 2v6.400h5V2M.3 2h7.400M2.700.6h2.600M3.200 3.500v3.500M4.800 3.500V7" stroke="#555" strokeWidth=".9" /></G>
      <V c="ml-[8px]" />
      <div className="flex-1" />
      <div className="flex h-full w-[246px] items-center text-[#4877d0]">
        <V c="" />
        <TB c="ml-[7px] w-[36px]">Analytics</TB>
        <G c="ml-[4px] mt-[2px] h-[9px] w-[10px]" v="0 0 10 9"><path d="M1 0v8h9M2.500 6L5 4l1.500 1L9 3" stroke="#4877d0" /></G>
        <V c="ml-[7px]" />
        <TB c="ml-[7px] w-[28px]">Details</TB>
        <G c="ml-[4px] mt-[2px] h-[9px] w-[9px]" v="0 0 9 9"><path d="M1 0v8h8M2.500 1H7M2.500 3H6M3 6.500l2-1.500L6.500 6 8.500 4" stroke="#4877d0" /></G>
        <V c="ml-[9px]" />
        <TB c="ml-[7px] w-[23px]">Fields</TB>
        <G c="ml-[4px] mt-[2px] h-[9px] w-[10px]" v="0 0 10 9"><rect y="0" width="10" height="9" fill="#4877d0" opacity=".5" /><rect y="4" width="10" height="3" fill="#174bc0" /></G>
        <V c="ml-[8px]" />
        <TB c="ml-[7px] w-[40px]">Properties</TB>
        <G c="ml-[4px] mt-[2px] h-[9px] w-[10px]" v="0 0 10 9"><path d="M0 2.500h5M8 2.500h2M0 6.500h2M5 6.500h5" stroke="#4877d0" /><circle cx="6.500" cy="2.500" r="1.300" stroke="#4877d0" /><circle cx="3.500" cy="6.500" r="1.300" stroke="#4877d0" /></G>
      </div>
    </div>
  );
}

const legendFill: Record<string, string> = { v: "#6527be", s: "#1c8fdc", d: "#07605a", m: "#971e56", c: "#f5535c", r: "#4c0709", g: "#1b7e3a", b: "#05288f", p: "#e65796", o: "#d17a13", t: "#0d9b95", n: "#05274a", w: "#853b07", l: "#a374f0", x: "#ffffff" };
const barFill: Record<string, string> = { v: "#783ec8", s: "#269dec", d: "#1a6d6b", m: "#a83062", c: "#fb6067", r: "#611c20", g: "#2f8f4e", b: "#1742a8", p: "#ef669c", o: "#e0851a", t: "#1aa9a0", n: "#1b3a5a", w: "#964c17", l: "#b080ff" };

const legendKeys = "vsdmcrgbpotnwlvsd" + "mcrgbpotnwlvsdmcr" + "gbpotnwlvsdmcrvsd" + "mcrgbpotnwlvsdmcr" + "gbpotnwlvsdmcrgbp" + "otnwlvsdmcrvsdx";
const legendDays = (
  "1/1 1/2 1/3 1/4 1/5 1/6 1/7 1/8 1/9 1/10 1/11 1/12 1/13 1/14 1/15 1/16 1/18 " +
  "1/19 1/20 1/21 1/22 1/23 1/24 1/25 1/26 1/27 1/28 1/29 1/30 1/31 2/1 2/2 2/3 2/4 " +
  "2/5 2/6 2/7 2/8 2/9 2/12 2/13 2/14 2/15 2/16 2/17 2/18 2/19 2/20 2/21 2/22 2/23 " +
  "2/24 2/25 2/26 2/27 2/28 3/1 3/2 3/3 3/5 3/6 3/7 3/8 3/9 3/10 3/11 3/12 3/13 " +
  "3/14 3/16 3/17 3/18 3/19 3/20 3/21 3/22 3/23 3/24 3/25 3/26 3/27 3/28 3/29 3/30 3/31 " +
  "4/1 4/2 4/3 4/4 4/5 4/6 4/7 4/8 4/9 4/10 4/11 4/12 4/13 4/14"
).split(" ");

/* Bar edges, in thirds of a pixel from x = 280. */
const barKeys = "gbpotnwlvsdmcrgbpotnwlvsdmcrvsdmcrgb" + "potnwlvsdmcrgbpotnwlvsdmcrgbpotnwlvsd";
const barEdges = [
  171, 187, 193, 219, 223, 247, 251, 276, 281, 307, 312, 337, 341, 366, 371, 393, 398, 420, 425, 448, 453, 475, 480, 502, 506, 528, 533, 555, 560, 591, 596, 627, 632, 663, 667, 697, 701, 733, 737, 768, 773, 796, 801, 826, 831, 857, 862, 887, 891, 916, 920, 947, 951, 977, 981, 1006, 1011, 1036, 1041, 1066, 1071, 1095, 1100, 1125, 1130, 1155, 1160, 1185, 1189, 1215, 1219, 1245,
  1249, 1275, 1279, 1303, 1308, 1333, 1338, 1365, 1369, 1392, 1398, 1423, 1428, 1453, 1458, 1482, 1487, 1512, 1517, 1543, 1548, 1577, 1583, 1612, 1617, 1648, 1653, 1683, 1688, 1720, 1725, 1753, 1758, 1788, 1794, 1824, 1830, 1860, 1865, 1893, 1899, 1929, 1934, 1965, 1970, 2000, 2005, 2035, 2040, 2071, 2076, 2102, 2107, 2134, 2139, 2163, 2168, 2192, 2197, 2223, 2228, 2253, 2258, 2282, 2287, 2313, 2317, 2342, 2347, 2371, 2376, 2400, 2406, 2427,
];
const topLabels: [string, number][] = [
  ["1/24", 197], ["1/27", 286], ["1/30", 372], ["2/2", 458], ["2/5", 543], ["2/7", 615], ["2/12", 714], ["2/15", 807], ["2/18", 897], ["2/21", 986], ["2/24", 1076], ["2/27", 1165],
  ["3/2", 1258], ["3/6", 1348], ["3/9", 1436], ["3/12", 1526], ["3/16", 1630], ["3/19", 1736], ["3/22", 1841], ["3/25", 1948], ["3/28", 2052], ["3/31", 2143], ["4/3", 2237], ["4/6", 2326],
];
const px = (e: number) => 280 + e / 3;

function Chart() {
  return (
    <svg className="block h-[204px] w-[829px] shrink-0" viewBox="283 443 829 204" fontFamily={SANS}>
      {[...barKeys].map((k, i) => {
        const a = px(barEdges[i * 2]);
        const b = px(barEdges[i * 2 + 1]);
        return (
          <g key={i} fill={barFill[k]}>
            {i > 0 && <rect x={a - 1.1} y="456" width="1.1" height="149.500" opacity=".4" />}
            <rect x={a} y="456" width={b - a + 0.2} height="149.500" />
          </g>
        );
      })}
      <g fontSize="6.2" fill="#8a8a8a" fontFamily="Noto Sans, sans-serif">
        {topLabels.map(([d, x]) => (
          <text key={d} x={px(x)} y="455" textLength={d.length > 3 ? 26.7 : 23.3} lengthAdjust="spacingAndGlyphs">{d + "/2014"}</text>
        ))}
      </g>
      <g stroke="#000" strokeOpacity=".03">
        {[485.5, 515.5, 545.5, 575.5].map((y) => <path key={y} d={`M337 ${y}H1089`} />)}
      </g>
      <g fontSize="6.9" fill="#7c7c7c">
        {[100, 80, 60, 40, 20, 0].map((n, i) => (
          <text key={n} x="327.500" y={458 + i * 30} textAnchor="end">{n}%</text>
        ))}
        {[365, 448.3, 531.3, 614.3, 697.7, 780.5, 864, 946.6, 1030].map((x, i) => (
          <text key={x} x={x} y="620" textAnchor="middle">{15 + i * 5}%</text>
        ))}
      </g>
      <text x="694.500" y="632" fontSize="7" fill="#444" textLength="37">price (Sum)</text>
      <text transform="translate(304.500 548) rotate(-90)" fontSize="7" fill="#333" textLength="34">price (Sum)</text>
      <rect x="337" y="517" width="16.500" height="26" fill="#fff" opacity=".22" />
      <rect x="1072" y="517" width="17" height="26" fill="#b8c4c8" opacity=".4" />
      <path d="M349 525l-5.500 5.500 5.500 5.500M1077 525l5.500 5.500-5.500 5.500" stroke="#fff" strokeWidth="1.700" fill="none" />
    </svg>
  );
}

function Card() {
  return (
    <div className="flex h-[299px] w-[829px] flex-col overflow-hidden bg-white">
      <div className="flex h-[22px] items-center pl-[12px] pt-[2px]">
        <Fit c="w-[131px] text-[8.800px] font-bold !leading-[12px] text-[#333]">price for Year colored by Year</Fit>
        <G c="ml-[666px] mt-[4px] h-[9px] w-[9px]" v="0 0 9 9"><circle cx="4.500" cy="4.500" r="4.300" fill="#e8bf1c" /><path d="M4.500 2v3M4.500 6v1" stroke="#fff3c0" /></G>
      </div>
      <div className="flex h-[73px]">
        <div className="w-[813px] overflow-hidden">
          <Fit c="ml-[14px] w-[14px] text-[7px] !leading-[10px] text-[#666]">Year</Fit>
          <div className="ml-[13.300px] grid auto-rows-[11.400px] grid-cols-[repeat(17,46.400px)]">
            {[...legendKeys].map((k, i) => (
              <div key={i} className="flex items-center">
                <svg className="h-[8px] w-[8px] shrink-0" viewBox="0 0 8 8"><circle cx="4" cy="4" r={k === "x" ? 3.4 : 3.8} fill={legendFill[k]} stroke={k === "x" ? "#ccc" : "none"} /></svg>
                {legendDays[i] && <Fit c={"ml-[1.500px] text-[7.200px] !leading-[10px] text-[#858585] " + (legendDays[i].length > 3 ? "w-[32px]" : "w-[28px]")}>{legendDays[i] + "/2014"}</Fit>}
              </div>
            ))}
          </div>
        </div>
        <div className="flex w-[10px] flex-col items-center justify-between bg-[#f1f1f1] py-[4px] text-[#444]">
          <Caret c="rotate-180 text-[#999]" />
          <div className="mb-[14px] h-[46px] w-[8px] bg-[#c1c1c1]" />
          <Caret />
        </div>
      </div>
      <Chart />
    </div>
  );
}

const VsCode = ({ c }: { c: string }) => (
  <G c={c}><path d="M11.500 0v4.500L2.500 11.700 1 11.200 0 10.200z" fill="#1f8ad0" /><path d="M0 5.800l1-1.300 1.500-.3 9 7.300V16z" fill="#1878be" /><path d="M11.500 0L16 2v12l-4.500 2z" fill="#33a4ee" /></G>
);

function InnerTaskbar() {
  return (
    <div className="flex h-[27px] items-center bg-[#202020]">
      <G c="ml-[358px] h-[14px] w-[14px]" v="0 0 14 14"><path d="M0 0h6.700v6.700H0zM7.300 0H14v6.700H7.300zM0 7.300h6.700V14H0zM7.300 7.300H14V14H7.300z" fill="#4cc2f5" /></G>
      <G c="ml-[12px] h-[13px] w-[15px]" v="0 0 15 13"><rect y="4" width="10" height="9" fill="#666" /><rect x="4" width="11" height="9" fill="#eee" /></G>
      <div className="ml-[7px] flex h-[24px] w-[24px] flex-col items-center justify-center gap-[2px] rounded-[3px] bg-[#2b2b2d]">
        <G c="h-[14px] w-[14px]"><circle cx="8" cy="8" r="8" fill="#ea4335" /><path d="M8 8L1.100 4A8 8 0 0 0 8 16z" fill="#34a853" /><path d="M8 8l7-3.500A8 8 0 0 1 8 16z" fill="#fbbc05" /><circle cx="8" cy="8" r="3.700" fill="#fff" /><circle cx="8" cy="8" r="2.900" fill="#4285f4" /></G>
        <div className="h-[2px] w-[9px] rounded-full bg-[#d29be0]" />
      </div>
      <G c="ml-[6px] h-[13px] w-[16px]" v="0 0 16 13"><path d="M0 1h6l1.500 2H16v10H0z" fill="#f9c93c" /><path d="M3 13V9h10v4z" fill="#2680c8" /></G>
      <VsCode c="ml-[11px] h-[14px] w-[15px]" />
      <G c="ml-[11px] h-[12px] w-[13px]" v="0 0 13 12"><rect width="13" height="12" rx="2" fill="#001e36" /><text x="6.500" y="8.500" fontSize="7" fontWeight="700" fill="#31a8ff" textAnchor="middle" fontFamily={SANS}>Ps</text></G>
      <G c="ml-[13px] h-[14px] w-[13px]"><path d="M8 0l7 4v8l-7 4-7-4V4z" fill="#555" /><path d="M8 0l4 2-3 4-4 2 1 4-2 2-3-2V4z" fill="#ccc" /><path d="M8 4l4 2v4l-4 2-3-2V6z" fill="#252525" /></G>
      <G c="ml-[13px] h-[14px] w-[14px]" v="0 0 14 14"><rect width="14" height="14" fill="#3c50dd" /><path d="M0 0h14L0 14z" fill="#2c9be8" opacity=".6" /><path d="M2 11l4-7M6 11l4-7v7M12 4v7" stroke="#fff" strokeWidth="1.300" /></G>
      <Chev c="ml-[236px]" up s="#ddd" />
      <G c="ml-[9px] h-[8px] w-[10px]" v="0 0 10 8"><path d="M.5 3C3 .3 7 .3 9.500 3M2 5c2-2 4-2 6 0M3.500 6.500c1-1 2-1 3 0" stroke="#ddd" /></G>
      <G c="ml-[4px] h-[8px] w-[10px]" v="0 0 10 8"><path d="M.5 3H2l2-2v6L2 5H.5zM5.500 2.500v3M7 1.500c1 2 1 3 0 5M8.500.5c1.500 3 1.500 4 0 7" stroke="#ddd" strokeWidth=".9" /></G>
      <G c="ml-[5px] h-[9px] w-[10px]" v="0 0 10 9"><rect x="1" y="3" width="7.500" height="5" rx="1" stroke="#ddd" /><rect x="1" y="3" width="5" height="5" fill="#ddd" /><path d="M3 0v3M9.500 4.500v2" stroke="#ddd" /></G>
      <div className="ml-[9px] flex w-[32px] flex-col items-end text-[7px] text-[#eee]">
        <Fit c="w-[29px] !leading-[9px]">11:28 AM</Fit><Fit c="w-[31px] !leading-[9px]">11/4/2022</Fit>
      </div>
      <div className="ml-[6px] flex h-[9px] w-[9px] items-center justify-center rounded-full bg-[#c893dc] text-[6px] text-[#333]">1</div>
    </div>
  );
}

function Capture() {
  return (
    <div className="flex h-[480px] w-[914px] flex-col">
      <Browser />
      <CognosHeader />
      <Toolbar />
      <div className="flex h-[342px]">
        <div className="flex w-[28px] shrink-0 flex-col items-center border-r border-[#e8e8e8] bg-white pt-[8px]">
          <Explore c="ml-px" s="#444" />
          <G c="ml-px mt-[15px] h-[11px] w-[11px]" v="0 0 11 11"><path d="M.5.5h3v3h-3zM3.500 2H6v6.500h2M6 5h2M8 3.500h2.500v3H8zM8 7.500h2.500v3H8z" stroke="#444" strokeWidth=".9" /></G>
          <Pin c="ml-px mt-[16px] h-[11px] w-[11px]" />
        </div>
        <div className="flex flex-1 flex-col bg-[#f3f3f3] pl-[29px] pt-[17px]">
          <Card />
        </div>
      </div>
      <div className="flex h-[4px] items-center"><div className="h-full w-[28px] bg-white" /><div className="h-full flex-1 bg-[#dedede] pl-[439px] pt-px"><div className="h-[2px] w-[8px] bg-[#777]" /></div></div>
      <InnerTaskbar />
    </div>
  );
}

function Document() {
  return (
    <main className="flex h-[544px]">
      <div className="w-[24px] bg-[#ccd0d5]" />
      <div className="w-[88px] bg-gradient-to-b from-[#cacdd2] to-[#b7babf] shadow-[inset_-8px_0_6px_-5px_#8f949b]" />
      <div className="flex w-[1149px] flex-col overflow-hidden border-x border-[#8a8f96] bg-white">
        <div className="flex h-[62px] shrink-0 items-start pl-[69px]">
          <div className="h-[16px] border-b-2 border-black font-['Liberation_Serif',serif] text-[19px] text-black">
            <Fit c="w-[339px] !leading-[13px]">PRICE FOR YEAR COLORED BY YEAR:</Fit>
          </div>
        </div>
        <div className="pl-[113px]"><Capture /></div>
      </div>
      <div className="flex-1 bg-gradient-to-b from-[#cacdd2] to-[#b7babf] shadow-[inset_8px_0_6px_-5px_#8f949b]" />
      <div className="flex w-[17px] flex-col items-center bg-[#d9dde3] text-[#444]">
        <Caret c="mt-[6px] h-[5px] w-[9px] rotate-180" />
        <div className="mt-[354px] flex h-[17px] w-[15px] flex-col items-center justify-center gap-[2px] rounded-[2px] border border-[#868b93] bg-[#f5f6f7]">
          <div className="h-px w-[8px] bg-[#777]" /><div className="h-px w-[8px] bg-[#777]" /><div className="h-px w-[8px] bg-[#777]" />
        </div>
        <Caret c="mt-[101px] h-[5px] w-[9px]" />
        <div className="mt-[4px] h-px w-full bg-[#a9aeb5]" />
        <G c="mt-[4px] h-[9px] w-[8px]" v="0 0 8 9"><path d="M1.500 4L4 1l2.500 3zM1.500 8L4 5l2.500 3z" fill="#444" /></G>
        <G c="mt-[9px] h-[9px] w-[9px]" v="0 0 9 9"><circle cx="4.500" cy="4.500" r="3.300" stroke="#555" strokeWidth="1.200" /></G>
        <G c="mt-[9px] h-[9px] w-[8px]" v="0 0 8 9"><path d="M1.500 1L4 4l2.500-3zM1.500 5L4 8l2.500-3z" fill="#444" /></G>
      </div>
    </main>
  );
}

const SV = ({ c }: { c: string }) => <div className={"h-full w-[2px] shrink-0 border-r border-white/60 bg-[#8f949c] " + c} />;

function StatusBar() {
  return (
    <div className="flex h-[22px] items-center border-t border-[#858a92] bg-gradient-to-b from-[#e2e5e9] to-[#bdc2c8] text-[11.500px] text-[#333]">
      <Fit c="ml-[8px] w-[72px]">Page: 70 of 92</Fit><SV c="ml-[9px]" />
      <Fit c="ml-[8px] w-[67px]">Words: 4,549</Fit><SV c="ml-[9px]" />
      <G c="ml-[7px] h-[16px] w-[17px]"><path d="M1 7l6-3 8 5-5 5z" fill="#eef3fa" stroke="#476ba5" /><path d="M1 9l8 6 6-5" stroke="#3a62a8" strokeWidth="1.500" /><path d="M7 1l8 8M14 0L8 9" stroke="#e03a2c" strokeWidth="2" /></G>
      <Fit c="ml-[16px] w-[67px]">English (U.K.)</Fit><SV c="ml-[9px]" />
      <div className="flex-1" />
      <SV c="" />
      <div className="ml-[3px] flex h-[18px] w-[19px] items-center justify-center rounded-[2px] border border-[#b78b28] bg-[#fbd867]">
        <G c="h-[13px] w-[12px]" v="0 0 12 13"><rect x=".5" y=".5" width="11" height="12" fill="#fff" stroke="#555" /><path d="M2 3h8M2 5h8M2 7h8M2 9h8M2 11h8" stroke="#666" strokeWidth=".8" /></G>
      </div>
      <G c="ml-[4px] h-[12px] w-[12px]"><path d="M1 2h5l2 2 2-2h5v11h-5l-2 2-2-2H1zM8 4v10M3 5h3M3 7h3M3 9h3M10 5h3M10 7h3M10 9h3" stroke="#555" fill="#f2f2f2" /></G>
      <G c="ml-[6px] h-[12px] w-[13px]"><path d="M1 1h11v13H1z" fill="#f5f5f5" stroke="#555" /><path d="M3 4h7M3 7h7M3 10h4" stroke="#666" /><circle cx="12" cy="12" r="4" fill="#3d86b9" /><path d="M10 10l3 1-1 3" stroke="#3f8a4a" strokeWidth="1.500" /></G>
      <G c="ml-[6px] h-[11px] w-[11px]" v="0 0 11 11"><path d="M0 .5h6M3 3h6M3 5.500h6M5 8h6M5 10.500h6" stroke="#777" /></G>
      <G c="ml-[8px] h-[11px] w-[11px]" v="0 0 11 11"><path d="M0 .5h11M0 3h11M0 5.500h11M0 8h11M0 10.500h11" stroke="#666" /></G>
      <Fit c="ml-[13px] w-[21px]">90%</Fit>
      <G c="ml-[7px] h-[17px] w-[17px]" v="0 0 17 17"><circle cx="8.500" cy="8.500" r="7.500" fill="#f3f4f5" stroke="#6f747b" /><path d="M5 8.500h7" stroke="#444" strokeWidth="1.500" /></G>
      <G c="h-[15px] w-[99px]" v="0 0 99 15"><path d="M0 7.500h99" stroke="#7a7f86" /><path d="M40.500 1.500h8v8l-4 4-4-4z" fill="#f6f7f8" stroke="#70757c" /></G>
      <G c="mr-[3px] h-[17px] w-[17px]" v="0 0 17 17"><circle cx="8.500" cy="8.500" r="7.500" fill="#f3f4f5" stroke="#6f747b" /><path d="M5 8.500h7M8.500 5v7" stroke="#444" strokeWidth="1.500" /></G>
    </div>
  );
}

function Taskbar() {
  return (
    <footer className="flex h-[40px] items-center bg-[#ededed]">
      <G c="ml-[16px] h-[16px] w-[16px]"><path d="M0 2.300L7 1.300v6.200H0zM8 1.200L16 0v7.500H8zM0 8.500h7v6.200L0 13.700zM8 8.500h8V16l-8-1.200z" fill="#000" /></G>
      <div className="ml-[16px] flex h-full w-[344px] items-center border border-[#c9c9c9] bg-white">
        <G c="ml-[11px] h-[18px] w-[17px]" v="0 0 17 18"><circle cx="10.500" cy="6.500" r="5.300" stroke="#222" strokeWidth="1.200" /><path d="M7 10.500L1 17" stroke="#222" strokeWidth="1.300" /></G>
        <Fit c="ml-[11px] w-[128px] text-[15px] !leading-[20px] text-[#333]">Type here to search</Fit>
      </div>
      <G c="ml-[16px] h-[17px] w-[17px]" v="0 0 17 17"><circle cx="8.500" cy="8.500" r="7" stroke="#000" strokeWidth="1.900" /></G>
      <G c="ml-[30px] h-[16px] w-[18px]" v="0 0 18 16"><path d="M1.500 0v2.500h11V0M1.500 16v-2.500h11V16M1.500 5h11v6h-11zM16.500 0v16" stroke="#111" strokeWidth="1.200" /><rect x="15" y="5" width="3" height="4" fill="#111" /></G>
      <G c="ml-[30px] h-[24px] w-[24px]" v="0 0 24 24">
        <circle cx="12" cy="12" r="12" fill="#1683d2" />
        <path d="M0 11C1 3 8 0 12 0c8 0 13 7 12 12-1 4-6 5-9 3 2-6-3-8-7-7-4 0-7 2-8 3z" fill="#3cbfd0" />
        <path d="M12 0c9 0 13 8 12 12-1 4-6 5-9 3 3-5 0-10-5-11z" fill="#62d26a" opacity=".75" />
        <path d="M8 9c-3 7 2 14 9 14 3-1 5-3 6-5-5 3-10 0-10-4 0-2 1-3 1-3-2-2-5-2-6-2z" fill="#0c4e9c" />
        <path d="M10 12c2-3 5 0 5 2s2 3 5 2c-5 3-10 0-10-4z" fill="#ededed" />
      </G>
      <div className="ml-[17px] flex h-full w-[40px] flex-col items-center pt-[10px]">
        <G c="h-[19px] w-[22px]" v="0 0 22 19"><path d="M0 1h8l2 2h11v15H0z" fill="#f9c846" /><path d="M0 0h9v3H0z" fill="#e3a21f" /><path d="M4 19v-8h14v8h-3.500v-4h-7v4z" fill="#3a94dd" /></G>
        <div className="mt-auto h-[2px] w-full bg-[#0067c0]" />
      </div>
      <G c="ml-[17px] h-[24px] w-[23px]" v="0 0 23 24"><path d="M7.500 7V3c0-3 8-3 8 0v4" stroke="#000" strokeWidth="1.300" /><rect y="6" width="23" height="18" rx="1" fill="#000" /><rect x="6" y="9.500" width="5" height="5" fill="#f25022" /><rect x="12" y="9.500" width="5" height="5" fill="#7fba00" /><rect x="6" y="15.500" width="5" height="5" fill="#00a4ef" /><rect x="12" y="15.500" width="5" height="5" fill="#ffb900" /></G>
      <G c="ml-[26px] h-[23px] w-[24px]" v="0 0 24 23"><path d="M0 8l12-8 12 8v15H0z" fill="#0a5aa8" /><path d="M2 8h20l-10 9z" fill="#fff" /><path d="M0 8l12 9 12-9v15H0z" fill="#28a3e8" /><path d="M12 17L24 8v15H3z" fill="#1a86d2" opacity=".6" /></G>
      <VsCode c="ml-[25px] h-[24px] w-[24px]" />
      <div className="ml-[13px] flex h-full w-[48px] flex-col items-center bg-[#fafafa] pt-[8px]">
        <WordLogo c="h-[22px] w-[22px]" />
        <div className="mt-auto h-[2px] w-full bg-[#0067c0]" />
      </div>
      <div className="flex-1" />
      <G c="h-[8px] w-[12px]" v="0 0 12 8"><path d="M1 7l5-5.500L11 7" stroke="#111" strokeWidth="1.300" /></G>
      <G c="ml-[9px] h-[12px] w-[17px]" v="0 0 17 12"><path d="M4 11C0 11 0 6 3.500 6 4 1 10 0 12 4c5 0 6 7 1 7z" fill="#888" stroke="#222" strokeWidth="1.200" /><path d="M4 10.500c1-4 6-4 8 0z" fill="#ddd" /></G>
      <G c="ml-[8px] h-[9px] w-[16px]" v="0 0 16 9"><path d="M.6.6h13v7.800H.6zM15 3v3" stroke="#111" strokeWidth="1.200" /><rect x="2" y="2" width="3" height="5" fill="#111" /></G>
      <G c="ml-[10px] h-[15px] w-[14px]" v="0 0 14 15"><path d="M3 14c0-5 4-8 9-8M1 12C1 6 6 2 12 2M6.500 14c0-3 2-5 5.500-5M10 14c0-1 1-2 2-2" stroke="#333" strokeWidth="1.200" /></G>
      <G c="ml-[7px] h-[15px] w-[17px]" v="0 0 17 15"><path d="M1 5h2.500L7 2v11l-3.500-3H1zM9.500 5c1.500 1.500 1.500 3.500 0 5M12 3c2.500 2.500 2.500 6.500 0 9" stroke="#222" strokeWidth="1.100" /><path d="M14.500 1c3 4 3 9 0 13" stroke="#aaa" /></G>
      <div className="ml-[10px] flex w-[24px] flex-col text-[12px] text-[#111]"><Fit c="w-[23px] !leading-[17px]">ENG</Fit><Fit c="w-[24px] !leading-[17px]">INTL</Fit></div>
      <div className="ml-[12px] flex w-[58px] flex-col items-center text-[12px] text-[#111]"><Fit c="w-[27px] !leading-[17px]">04:35</Fit><Fit c="w-[58px] !leading-[17px]">26/11/2022</Fit></div>
      <G c="ml-[17px] mt-[3px] h-[26px] w-[26px]" v="0 0 26 26"><path d="M1 2h16v12H7l-3 4v-4H1z" fill="#000" /><path d="M4 5.500h10M4 8.500h10M4 11.500h6" stroke="#fff" strokeWidth="1.200" /><circle cx="16" cy="16" r="8.500" fill="#d6d6d6" stroke="#777" strokeWidth="1" /><text x="16" y="20.300" fontSize="11.500" fill="#111" textAnchor="middle" fontFamily={SANS}>21</text></G>
      <div className="ml-[11px] mr-[4px] h-full w-px bg-[#bdbdbd]" />
    </footer>
  );
}

export default function App() {
  return (
    <div className="flex h-[768px] w-[1366px] flex-col overflow-hidden whitespace-pre font-['Open_Sans',sans-serif]">
      <Header />
      <div className="flex h-[87px] border-b-2 border-t border-b-[#8b9097] border-t-[#b6babf] bg-gradient-to-b from-white via-[#fafbfb] to-[#e8eaed]">
        <ClipboardGroup />
        <FontGroup />
        <ParagraphGroup />
        <StylesGroup />
        <EditingGroup />
      </div>
      <Ruler />
      <Document />
      <StatusBar />
      <Taskbar />
    </div>
  );
}
